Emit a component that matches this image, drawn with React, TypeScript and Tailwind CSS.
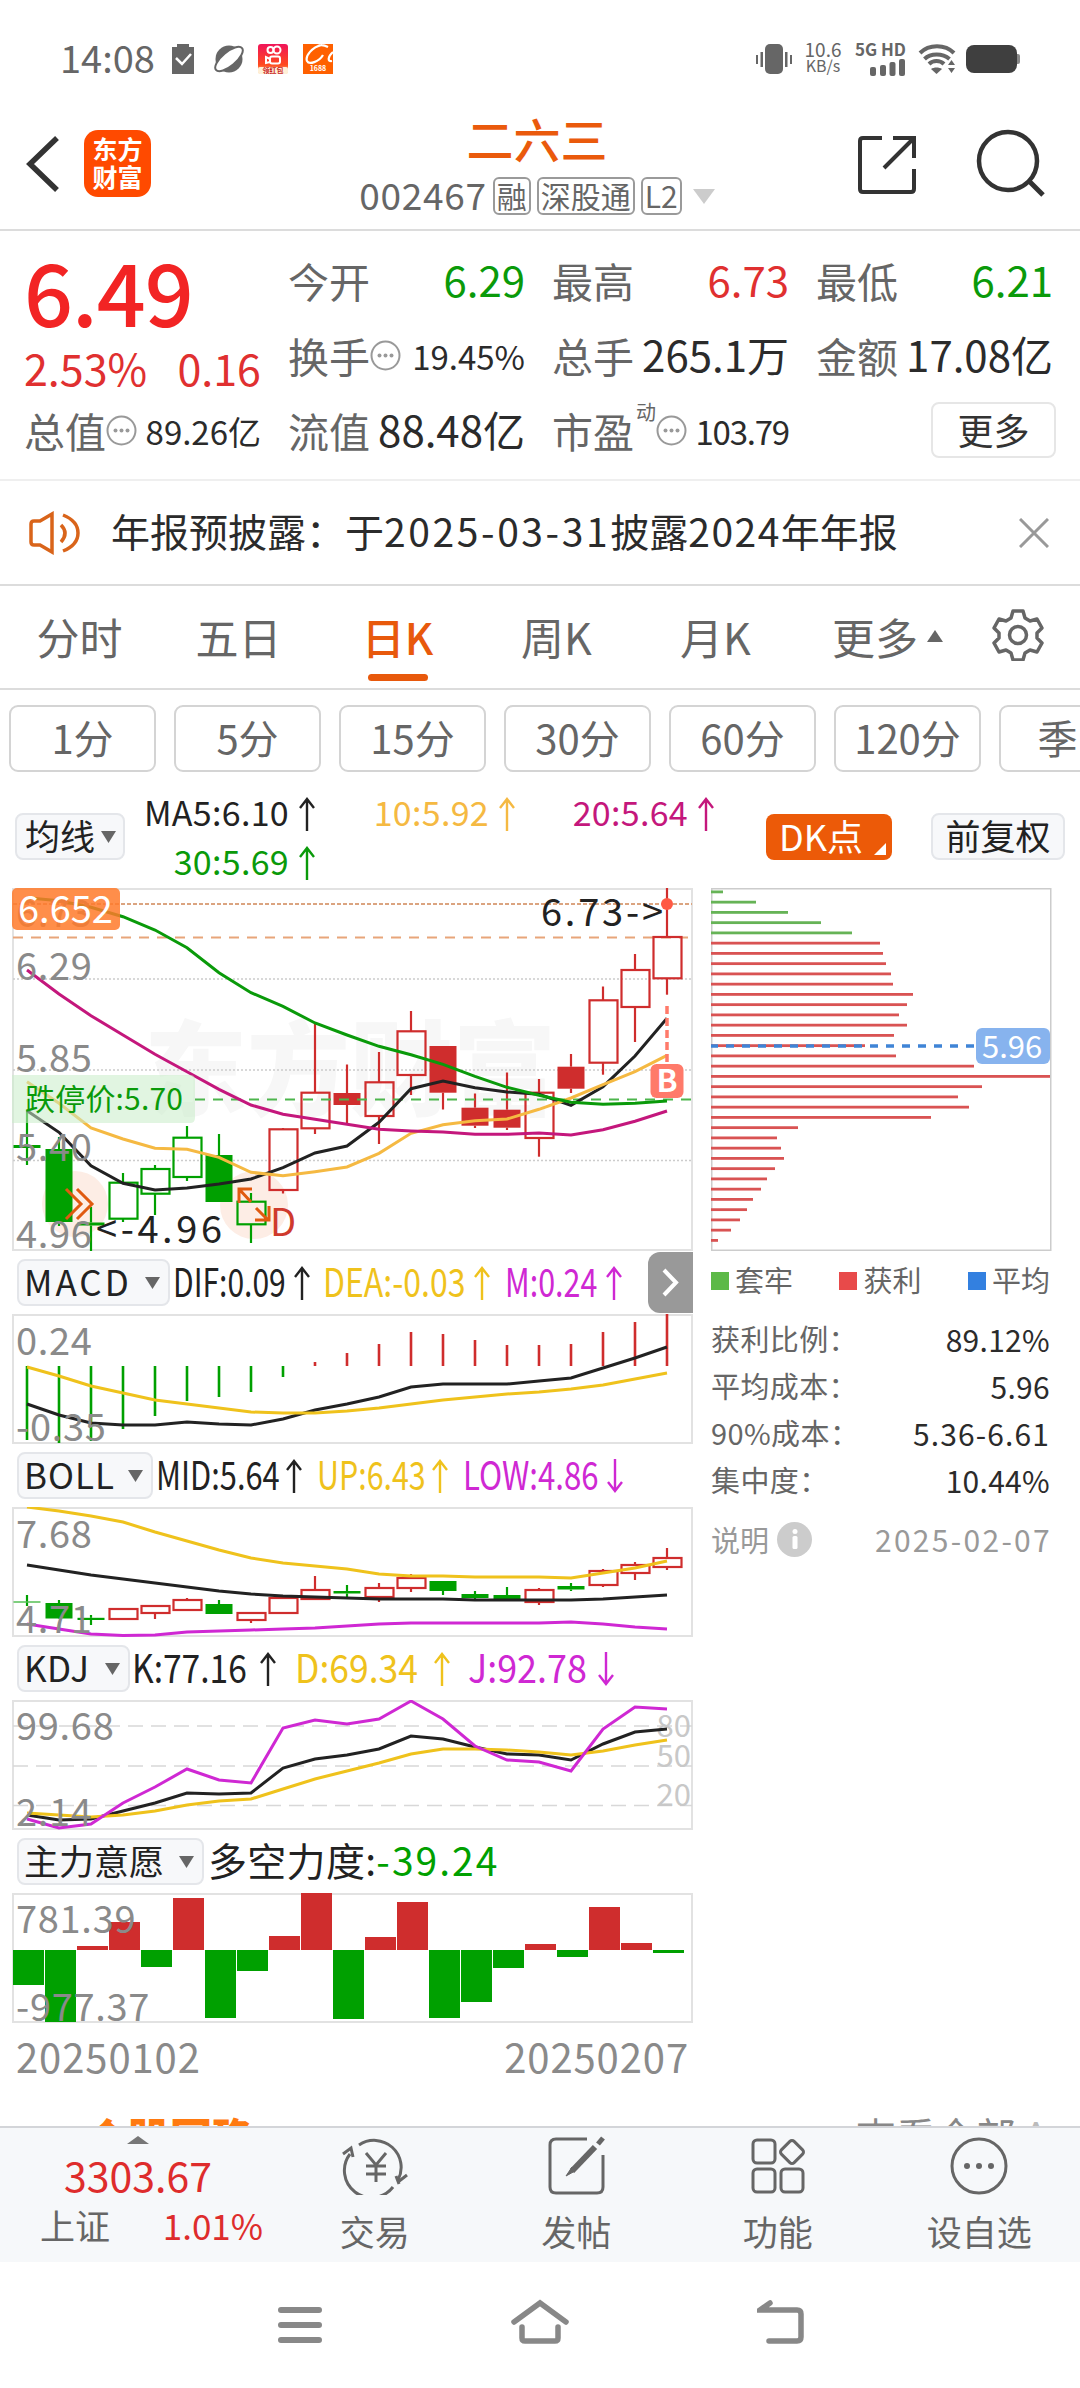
import type { ReactNode } from 'react';

const STEP = 32;
const FIRST = 15;
const px = (i: number) => FIRST + i * STEP;

const RED = '#cf2d2d';
const GREEN = '#00a000';

// [high, top, bottom, low, kind] - kind: g/G = green hollow/solid, r/R = red hollow/solid
type Candle = [number, number, number, number, 'g' | 'G' | 'r' | 'R'];

const kline: Candle[] = [
  [222, 257, 260, 277, 'G'],
  [249, 261, 334, 338, 'G'],
  [319, 334.5, 337.5, 363, 'G'],
  [285, 294.7, 330.7, 334, 'g'],
  [277, 281, 305.7, 327, 'g'],
  [238, 249.7, 289, 293, 'g'],
  [246, 267, 314, 314, 'G'],
  [305, 313.7, 336.3, 355, 'g'],
  [240, 241.3, 302, 305.5, 'r'],
  [135.5, 204.7, 240.3, 246, 'r'],
  [176.5, 205, 217, 237, 'R'],
  [164, 194.3, 228, 256, 'r'],
  [123, 143.3, 187, 207, 'r'],
  [158, 158, 204.7, 221.5, 'R'],
  [205.5, 219.7, 237.7, 240, 'R'],
  [184.5, 221.7, 239.7, 242, 'R'],
  [191, 204.7, 250, 268.7, 'r'],
  [166, 178.7, 200.7, 205, 'R'],
  [98.5, 112.3, 174.7, 186.7, 'r'],
  [66, 82, 119, 154, 'r'],
  [0, 49, 90.3, 106.7, 'r'],
];

const ma5 = [222.7, 244.3, 277.7, 295.3, 302, 300, 296, 291, 279.7, 265, 258, 234.3, 200.7, 193, 199.7, 204, 206.3, 217.3, 198.7, 168, 130.3];
const ma10 = [193.7, 215.3, 240, 251, 260.3, 261.3, 269.3, 284.3, 287.7, 283.7, 279, 265.3, 245.3, 236.7, 232.7, 231, 221.3, 210, 196.7, 183.7, 167.3];
const ma20 = [82, 106, 127.7, 147, 166.3, 183.7, 201.3, 217, 226.3, 231.3, 236.3, 241.3, 243, 244, 246.3, 246.3, 245, 247, 241.7, 233.3, 223];
const ma30 = [9.7, 12.7, 19.3, 28.7, 42, 59.7, 84.7, 104.7, 118.3, 135, 147, 158.3, 166.7, 176.3, 188.3, 199.3, 207.3, 214.3, 216.3, 215.3, 213];

const macdBars = [126, 129, 127, 115, 102, 87, 83, 78, 63, 48, 39, 30, 18, 20, 26, 31, 31, 30, 18, 8, 0];
const dif = [90, 101, 109, 111, 111, 108, 110, 111, 105, 96, 90, 83, 73, 70, 70, 70, 67, 64, 54, 44, 33];
const dea = [53, 62, 72, 79, 86, 90, 94, 98, 99, 99, 97, 94, 90, 86, 83, 80, 78, 75, 71, 65, 59];

const bollUp = [0, 4, 9, 15, 25, 34, 43, 51, 56, 59, 62, 67, 69, 69, 70, 70, 70, 71, 66, 61, 54];
const bollMid = [58, 63, 68, 72, 76, 80, 84, 87, 89, 90, 91, 92, 92, 92, 93, 93, 93, 93, 92, 90, 88];
const bollLow = [117, 122, 127, 128.5, 128, 125, 124, 123, 122, 121, 119, 117, 116, 116, 116, 116, 116, 115, 117, 120, 122];
const bollCandles: Candle[] = [
  [88, 94.5, 95.5, 99, 'G'],
  [93, 96, 111.5, 112, 'G'],
  [108, 110.8, 113, 118, 'G'],
  [101, 102, 112, 112, 'r'],
  [99, 99, 106, 112, 'r'],
  [91, 93, 103, 103, 'r'],
  [93, 97, 107, 107, 'G'],
  [105, 106, 113, 116, 'r'],
  [91, 91, 106, 106, 'r'],
  [69, 83, 92, 92, 'r'],
  [78, 84, 86.5, 91, 'G'],
  [76, 81, 90, 95, 'r'],
  [67, 71, 81, 85, 'r'],
  [74, 74, 84, 88, 'G'],
  [84, 87, 91, 92, 'G'],
  [80, 88, 92, 92, 'G'],
  [81, 83, 95, 98, 'r'],
  [76, 79, 82.5, 84, 'G'],
  [62, 64, 78, 80, 'r'],
  [55, 58, 66, 73, 'r'],
  [41, 51, 60, 63, 'r'],
];

const kdjK = [115, 120, 119, 111, 103, 93, 94, 93, 68, 59, 55, 49, 36, 39, 47, 54, 55, 60, 44, 32, 29];
const kdjD = [113, 115, 117, 115, 111, 105, 101, 99, 89, 79, 71, 63, 54, 49, 49, 50, 52, 55, 51, 45, 40];
const kdjJ = [119, 128, 124, 103, 87, 69, 80, 83, 28, 20, 24, 19, 1, 19, 46, 60, 62, 71, 29, 7, 9];

const force = [92, 129, 53, 29, 74, 5, 125, 78, 43, 0, 126, 44, 9, 125, 109, 75, 51, 64, 14, 50, 60];

const chips = [
  12, 45, 77, 110, 141, 169, 172, 175, 180, 182, 202, 196, 188, 196, 183, 154, 185, 263, 339, 271, 247, 258, 220, 87, 66, 70, 73,
  64, 56, 50, 42, 36, 29, 20, 7,
];

function Line({ data, color }: { data: number[]; color: string }) {
  return <polyline points={data.map((y, i) => `${px(i)},${y}`).join(' ')} fill="none" stroke={color} strokeWidth={3} />;
}

function Candles({ data }: { data: Candle[] }) {
  return (
    <>
      {data.map(([hi, top, bot, lo, kind], i) => {
        const color = kind === 'g' || kind === 'G' ? GREEN : RED;
        const solid = kind === 'G' || kind === 'R';
        const x = px(i);
        return (
          <g key={i} stroke={color} strokeWidth={2.2}>
            <line x1={x} x2={x} y1={hi} y2={top} />
            <line x1={x} x2={x} y1={bot} y2={lo} />
            {solid ? (
              <rect x={x - 13.5} y={top} width={27} height={bot - top} fill={color} stroke="none" />
            ) : (
              <rect x={x - 13.5} y={top} width={28} height={bot - top} fill="none" />
            )}
          </g>
        );
      })}
    </>
  );
}

function AxisText({ x = 4, y, children }: { x?: number; y: number; children: ReactNode }) {
  return (
    <text x={x} y={y} fontSize={38} letterSpacing={0.7} fill="#8a8a8a">
      {children}
    </text>
  );
}

function Arrow({ down = false }: { down?: boolean }) {
  return (
    <svg width="16" height="34" viewBox="0 0 16 34" fill="none" stroke="currentColor" strokeWidth="2.4" className="shrink-0">
      {down ? <path d="M8 0v32M1 23l7 9 7-9" /> : <path d="M8 34V2M1 11l7-9 7 9" />}
    </svg>
  );
}

function Caret({ className = '' }: { className?: string }) {
  return (
    <svg width="15" height="12" viewBox="0 0 15 12" fill="#666" className={`shrink-0 ${className}`}>
      <path d="M0 0h15L7.5 12z" />
    </svg>
  );
}

function Dots() {
  return (
    <svg width="31" height="31" viewBox="0 0 31 31" className="shrink-0">
      <circle cx="15.5" cy="15.5" r="14" fill="none" stroke="#999" strokeWidth="2" />
      <circle cx="9.5" cy="15.5" r="2" fill="#999" />
      <circle cx="15.5" cy="15.5" r="2" fill="#999" />
      <circle cx="21.5" cy="15.5" r="2" fill="#999" />
    </svg>
  );
}

// Indicator readout drawn in condensed type
function Readout({ text, box, scale, color, down }: { text: string; box: string; scale: string; color: string; down?: boolean }) {
  return (
    <div className={`flex items-center justify-between shrink-0 ${box} ${color}`}>
      <div className="w-0">
        <span className={`inline-block whitespace-nowrap text-[39px] leading-[40px] origin-left relative -top-[2px] ${scale}`}>{text}</span>
      </div>
      <Arrow down={down} />
    </div>
  );
}

function Picker({ children, box }: { children: ReactNode; box: string }) {
  return (
    <div className={`flex items-center justify-between h-[47px] pl-[5px] pr-[8px] border-2 border-[#e4e6ea] rounded-lg bg-[#f7f8fa] text-[#222] text-[35px] leading-none shrink-0 ${box}`}>
      <span className="whitespace-nowrap relative -top-[2px]">{children}</span>
      <Caret />
    </div>
  );
}

function StatusBar() {
  return (
    <div className="flex items-center h-[118px] pl-[60px] pr-[60px] text-[#666]">
      <div className="text-[38px] leading-none relative -top-[2px]">14:08</div>
      <svg width="22" height="30" viewBox="0 0 22 30" className="ml-[17px]">
        <path d="M0 3h5V0h12v3h5v27H0z" fill="#666" />
        <path d="M4 14l6 6 9-10" stroke="#fff" strokeWidth="2.5" fill="none" />
      </svg>
      <svg width="32" height="30" viewBox="0 0 32 30" className="ml-[19px]">
        <circle cx="16" cy="15" r="13.5" fill="#666" />
        <ellipse cx="16" cy="15" rx="17" ry="7" transform="rotate(-40 16 15)" fill="#fff" stroke="#666" strokeWidth="2" />
      </svg>
      <svg width="30" height="30" viewBox="0 0 30 30" className="ml-[13px]">
        <defs>
          <linearGradient id="ks" x1="0" y1="0" x2="0" y2="1">
            <stop offset="0" stopColor="#f0145a" />
            <stop offset="0.7" stopColor="#ff4a1c" />
            <stop offset="1" stopColor="#ffd9a0" />
          </linearGradient>
        </defs>
        <rect width="30" height="30" rx="3" fill="url(#ks)" />
        <rect y="23" width="30" height="7" rx="2" fill="#fff0d8" />
        <g fill="none" stroke="#fff" strokeWidth="2">
          <circle cx="12.5" cy="6" r="3" />
          <circle cx="19" cy="6" r="3.5" />
          <rect x="12" y="12.500" width="10" height="7" rx="2" />
          <path d="M12 15l-4-2v6l4-1" />
        </g>
        <text x="15" y="29" fontSize="7" fontWeight="700" fill="#c81e1e" textAnchor="middle">领红包</text>
      </svg>
      <svg width="30" height="30" viewBox="0 0 30 30" className="ml-[15px]">
        <rect width="30" height="30" fill="#ff6000" />
        <path d="M19 1C9 3 2 12 4 17c2 4 12 1 16-6M15 2c4-2 8 0 10 1M30 8c-5 4-6 10-1 9" fill="none" stroke="#fff" strokeWidth="2.2" />
        <text x="15" y="27" fontSize="7" fontWeight="700" fill="#fff" textAnchor="middle">1688</text>
      </svg>
      <div className="flex-1" />
      <svg width="36" height="30" viewBox="0 0 36 30" fill="#666">
        <rect x="9" width="18" height="30" rx="5" />
        <rect x="0" y="11" width="2" height="9" />
        <rect x="4.5" y="8" width="2.5" height="15" />
        <rect x="29" y="8" width="2.5" height="15" />
        <rect x="34" y="11" width="2" height="9" />
      </svg>
      <div className="ml-[13px] w-[36px] flex flex-col items-center text-[19px] leading-[17px]">
        <div className="-mt-[4px]">10.6</div>
        <div className="text-[16px]">KB/s</div>
      </div>
      <div className="ml-[16px] w-[49px] flex flex-col items-end">
        <div className="text-[17px] leading-[15px] font-bold whitespace-nowrap -mt-[2px]">5G HD</div>
        <svg width="36" height="17" viewBox="0 0 36 17" fill="#666" className="mt-[3px]">
          <rect x="0" y="8" width="6" height="9" rx="2" />
          <rect x="10" y="6" width="6" height="11" rx="2" />
          <rect x="19.5" y="3" width="6" height="14" rx="2" />
          <rect x="29" y="0" width="6" height="17" rx="2" />
        </svg>
      </div>
      <svg width="38" height="30" viewBox="0 0 38 30" className="ml-[12px]" fill="none" stroke="#666" strokeWidth="4">
        <path d="M2 9c9-9 25-9 34 0M6.500 15c6-6 18-6 25 0M11 20c4-4 11-4 15 0" />
        <path d="M13 25c3-2 8-2 11 0l-5.500 5z" fill="#666" stroke="none" />
        <path d="M30 21l3.500-5 3.500 5zM30 24h7l-3.500 5z" fill="#666" stroke="none" />
      </svg>
      <svg width="54" height="28" viewBox="0 0 54 28" className="ml-[10px]" fill="#3f3f3f">
        <rect width="51" height="28" rx="8" />
        <path d="M51 9h1q2 0 2 2v6q0 2-2 2h-1z" fill="#888" />
      </svg>
    </div>
  );
}

function Tag({ children }: { children: ReactNode }) {
  return (
    <span className="flex items-center h-[38px] px-[2px] border-2 border-[#9a9a9a] rounded-md text-[30px] leading-none">
      <span className="relative -top-[1px]">{children}</span>
    </span>
  );
}

function Header() {
  return (
    <div className="flex items-center h-[113px] border-b-2 border-[#dcdcdc] pl-[26px] pr-[34px]">
      <svg width="34" height="56" viewBox="0 0 34 56" fill="none" stroke="#333" strokeWidth="5.500" className="-mt-[20px]">
        <path d="M31 2L4 28l27 26" />
      </svg>
      <div className="ml-[24px] -mt-[20px] size-[67px] rounded-[14px] bg-[#ff4a00] text-white font-bold text-[25px] leading-[28px] text-center pt-[4px]">
        东方
        <br />
        财富
      </div>
      <div className="flex-1 flex flex-col items-center pl-[66px]">
        <div className="text-[47px] leading-[48px] font-medium text-[#ea5a0c] -mt-[6px]">二六三</div>
        <div className="flex items-center gap-[6px] mt-[15px] pb-[12px] text-[#666]">
          <span className="text-[37px] leading-[38px] tracking-[0.7px] relative -top-[2px]">002467</span>
          <Tag>融</Tag>
          <Tag>深股通</Tag>
          <Tag>L2</Tag>
          <svg width="22" height="15" viewBox="0 0 22 15" fill="#ccc" className="ml-[5px]">
            <path d="M0 0h22L11 15z" />
          </svg>
        </div>
      </div>
      <svg width="60" height="60" viewBox="0 0 60 60" fill="none" stroke="#333" strokeWidth="4" className="-mt-[20px]">
        <path d="M25 4H6q-3 0-3 3v48q0 3 3 3h48q3 0 3-3V35" />
        <path d="M36 4h21v20M57 4L27 34" />
      </svg>
      <svg width="70" height="70" viewBox="0 0 70 70" fill="none" stroke="#333" strokeWidth="4.5" className="ml-[59px] -mt-[20px]">
        <circle cx="32" cy="32" r="29" />
        <path d="M53 52l14 14" strokeWidth="5" />
      </svg>
    </div>
  );
}

function Cell({ label, value, tone = 'text-[#2b2b2b]', info, sup }: { label: string; value: string; tone?: string; info?: boolean; sup?: string }) {
  return (
    <div className="flex items-center justify-between h-[44px]">
      <div className="flex items-center text-[41px] leading-none text-[#666] whitespace-nowrap">
        <span>{label}</span>
        {sup && <span className="text-[20px] self-start -mt-[8px] ml-[2px]">{sup}</span>}
        {info && <Dots />}
      </div>
      <span className={`leading-none whitespace-nowrap relative ${info ? 'text-[33px] top-[1px]' : 'text-[42px] -top-[1px]'} ${sup ? 'tracking-[-1.2px]' : ''} ${tone}`}>
        {value}
      </span>
    </div>
  );
}

function Quote() {
  const red = 'text-[#e03030]';
  const green = 'text-[#0a9a0a]';
  return (
    <div className="grid grid-cols-4 gap-x-[27px] h-[250px] pl-[24px] pr-[27px] border-b-2 border-[#efefef]">
      <div className="pt-[14px]">
        <div className="text-[86px] leading-[90px] font-medium text-[#f22424] tracking-[-1px]">6.49</div>
        <div className={`flex justify-between mt-[10px] mb-[19px] text-[43px] leading-[44px] ${red}`}>
          <span>2.53%</span>
          <span>0.16</span>
        </div>
        <Cell label="总值" value="89.26亿" info />
      </div>
      <div className="flex flex-col gap-[31px] pt-[27px]">
        <Cell label="今开" value="6.29" tone={green} />
        <Cell label="换手" value="19.45%" info />
        <Cell label="流值" value="88.48亿" />
      </div>
      <div className="flex flex-col gap-[31px] pt-[27px]">
        <Cell label="最高" value="6.73" tone={red} />
        <Cell label="总手" value="265.1万" />
        <Cell label="市盈" value="103.79" info sup="动" />
      </div>
      <div className="flex flex-col gap-[31px] pt-[27px]">
        <Cell label="最低" value="6.21" tone={green} />
        <Cell label="金额" value="17.08亿" />
        <div className="-my-[6px] -mr-[3px] self-end flex items-center justify-center w-[125px] h-[56px] pb-[3px] border-2 border-[#e6e6e6] rounded-lg text-[36px] leading-none text-[#333]">
          更多
        </div>
      </div>
    </div>
  );
}

function Notice() {
  return (
    <div className="flex items-center h-[105px] border-b-2 border-[#dcdcdc] pl-[29px] pr-[31px]">
      <svg width="52" height="44" viewBox="0 0 52 44" fill="none" stroke="#d9641a" strokeWidth="3.5">
        <path d="M23 3v38L11 34H5q-3 0-3-3V13q0-3 3-3h6z" />
        <path d="M32 14q8 8 0 17M34 4q15 6 15 18T34 40" />
      </svg>
      <div className="ml-[30px] flex-1 text-[39px] leading-none text-[#2b2b2b] whitespace-nowrap relative -top-[2px]">
        年报预披露：于<span className="tracking-[2.6px]">2025-03-31</span>披露<span className="tracking-[1.5px]">2024</span>年年报
      </div>
      <svg width="30" height="30" viewBox="0 0 30 30" stroke="#999" strokeWidth="3">
        <path d="M1 1l28 28M29 1L1 29" />
      </svg>
    </div>
  );
}

function Tabs() {
  return (
    <div className="flex items-center h-[104px] border-b-2 border-[#dcdcdc] text-[43px] text-[#666]">
      {['分时', '五日', '日K', '周K', '月K'].map((t) => (
        <div key={t} className={`relative flex items-center justify-center w-[159px] h-full pb-[2px] leading-none ${t === '日K' ? 'text-[#e8590c] font-medium' : ''}`}>
          {t}
          {t === '日K' && <span className="absolute bottom-[7px] w-[60px] h-[7px] rounded-full bg-[#e8590c]" />}
        </div>
      ))}
      <div className="flex items-center ml-[37px] pb-[2px] leading-none">
        更多
        <svg width="16" height="12" viewBox="0 0 16 12" fill="#666" className="ml-[9px]">
          <path d="M0 12h16L8 0z" />
        </svg>
      </div>
      <svg width="52" height="52" viewBox="0 0 52 52" fill="none" stroke="#666" strokeWidth="3.5" strokeLinejoin="round" className="ml-auto mr-[36px] -mt-[4px]">
        <path d="M21 2h10l2 7 5 3 7-2 5 9-5 5v5l5 5-5 9-7-2-5 3-2 7H21l-2-7-5-3-7 2-5-9 5-5v-5l-5-5 5-9 7 2 5-3z" />
        <circle cx="26" cy="26" r="8.5" />
      </svg>
    </div>
  );
}

function Minutes() {
  return (
    <div className="flex gap-[18px] pl-[9px] pt-[15px] overflow-hidden">
      {['1分', '5分', '15分', '30分', '60分', '120分', '季'].map((t) => (
        <div key={t} className="shrink-0 flex items-center justify-center w-[147px] h-[67px] pb-[3px] border-2 border-[#d4d4d4] rounded-[9px] text-[40px] leading-none text-[#666]">
          {t === '季' ? <span className="ml-[-30px]">{t}</span> : t}
        </div>
      ))}
    </div>
  );
}

function MaItem({ text, color }: { text: string; color: string }) {
  return (
    <div className={`flex items-center justify-end gap-[10px] h-[49px] leading-none whitespace-nowrap ${color}`}>
      <span className="relative -top-[2px] tracking-[0.3px]">{text}</span>
      <Arrow />
    </div>
  );
}

function MaBar() {
  return (
    <div className="flex h-[116px] text-[34px]">
      <div className="ml-[15px] mt-[41px] flex items-center justify-between w-[110px] h-[47px] pl-[8px] pr-[7px] border-2 border-[#e4e6ea] rounded-lg bg-[#f7f8fa] text-[35px] leading-none text-[#222]">
        <span className="whitespace-nowrap relative -top-[2px]">均线</span>
        <Caret />
      </div>
      <div className="ml-[12px] mt-[17px] grid grid-cols-[178px_200px_199px] content-start">
        <MaItem text="MA5:6.10" color="text-[#222]" />
        <MaItem text="10:5.92" color="text-[#f5b942]" />
        <MaItem text="20:5.64" color="text-[#c4177c]" />
        <MaItem text="30:5.69" color="text-[#0a9a0a]" />
      </div>
      <div className="ml-auto mt-[42px] relative w-[126px] h-[46px] rounded-lg bg-[#ec5a08] text-white text-[36px] leading-[42px] pl-[13px] whitespace-nowrap">
        DK点
        <svg width="12" height="12" viewBox="0 0 12 12" fill="#fff" className="absolute right-[6px] bottom-[5px]">
          <path d="M12 0v12H0z" />
        </svg>
      </div>
      <div className="ml-[39px] mr-[15px] mt-[41px] flex items-center justify-center w-[134px] h-[47px] pb-[4px] border-2 border-[#e4e6ea] rounded-lg bg-[#f7f8fa] text-[35px] leading-none text-[#222]">
        前复权
      </div>
    </div>
  );
}

function KlineChart() {
  return (
    <svg width="681" height="363" viewBox="0 0 681 363" className="block overflow-visible">
      <rect x="1" y="1" width="679" height="361" fill="none" stroke="#e2e2e2" strokeWidth="2" />
      <text x="132" y="220" fontSize="103" fontWeight="900" fill="#f7f7f7">
        东方财富
      </text>
      <g stroke="#ccc" strokeWidth="1.5" strokeDasharray="2 2">
        <path d="M1 91h679M1 182h679M1 272.500h679" />
      </g>
      <circle cx="63" cy="316" r="33" fill="#fdede5" />
      <circle cx="242" cy="317" r="34" fill="#fdede5" />
      <path d="M1 16h679" stroke="#dba480" strokeWidth="2" strokeDasharray="4 2" />
      <path d="M1 49.500h675" stroke="#e8a57a" strokeWidth="2" strokeDasharray="10 8" />
      <Candles data={kline} />
      <path d="M183 211.500h497" stroke="#4db54d" strokeWidth="1.8" strokeDasharray="10 8" />
      <Line data={ma5} color="#222" />
      <Line data={ma10} color="#f5b942" />
      <Line data={ma20} color="#c4177c" />
      <Line data={ma30} color="#0a9a0a" />

      <g fill="none" stroke="#e05a10" strokeWidth="3">
        <path d="M54 301l15 15-15 15M65 301l15 15-15 15" />
        <path d="M239 314l-12-13M240 301h-13v14M244 320l12 12M243 332h14v-14" />
      </g>

      <AxisText y={39}>6.73</AxisText>
      <AxisText y={92}>6.29</AxisText>
      <AxisText y={184}>5.85</AxisText>
      <AxisText y={273}>5.40</AxisText>
      <AxisText y={360}>4.96</AxisText>

      <rect x="0" y="0" width="108" height="42" rx="5" fill="#ff7a2a" fillOpacity="0.85" />
      <text x="6" y="34.5" fontSize="38" fill="#fff">
        6.652
      </text>
      <path d="M0 187h178q5 0 5 5v38q0 5-5 5H0z" fill="#c9ecc9" fillOpacity="0.55" />
      <text x="13" y="222" fontSize="30" fill="#0a9a0a" textLength="158">
        跌停价:5.70
      </text>
      <text x="84" y="355" fontSize="38" fill="#222" textLength="126">
        {'<-4.96'}
      </text>
      <text x="529" y="37.5" fontSize="38" fill="#222" textLength="122">
        {'6.73->'}
      </text>
      <text x="258" y="348" fontSize="38" fill="#cf3a2d">
        D
      </text>
      <path d="M655 118v58" stroke="#ff7a6a" strokeWidth="3.5" strokeDasharray="8 4" />
      <circle cx="655" cy="16" r="6" fill="#ff5a45" />
      <rect x="638.5" y="176" width="33" height="34" rx="6" fill="#ff7a6a" />
      <text x="655" y="204" fontSize="31" fontWeight="700" fill="#fff" textAnchor="middle">
        B
      </text>
    </svg>
  );
}

function Panel({ children }: { children: ReactNode }) {
  return (
    <svg width="681" height="130" viewBox="0 0 681 130" className="block">
      <rect x="1" y="1" width="679" height="128" fill="none" stroke="#e2e2e2" strokeWidth="2" />
      {children}
    </svg>
  );
}

function Indicators() {
  const yellow = 'text-[#efc21c]';
  const purple = 'text-[#cf28d3]';
  return (
    <div className="w-[681px]">
      <KlineChart />
      <div className="relative flex items-center h-[63px] pl-[5px]">
        <Picker box="w-[153px]"><span className="tracking-[3px]">MACD</span></Picker>
        <Readout text="DIF:0.09" box="ml-[3px] w-[137px]" scale="scale-x-[0.77]" color="text-[#222]" />
        <Readout text="DEA:-0.03" box="ml-[13px] w-[167px]" scale="scale-x-[0.82]" color={yellow} />
        <Readout text="M:0.24" box="ml-[15px] w-[117px]" scale="scale-x-[0.78]" color={purple} />
        <div className="absolute right-0 top-[1px] w-[45px] h-[61px] rounded-l-[12px] bg-[#999] flex items-center justify-center">
          <svg width="17" height="29" viewBox="0 0 17 29" fill="none" stroke="#fff" strokeWidth="4">
            <path d="M2 2l12 12.500L2 27" />
          </svg>
        </div>
      </div>
      <Panel>
        {macdBars.map((y, i) => (
          <line key={i} x1={px(i)} x2={px(i)} y1={52} y2={y} stroke={y > 52 ? GREEN : RED} strokeWidth={2.6} />
        ))}
        <Line data={dif} color="#222" />
        <Line data={dea} color="#efc21c" />
        <AxisText y={41}>0.24</AxisText>
        <AxisText y={127}>-0.35</AxisText>
      </Panel>

      <div className="flex items-center h-[63px] pl-[5px]">
        <Picker box="w-[136px]"><span className="tracking-[1px]">BOLL</span></Picker>
        <Readout text="MID:5.64" box="ml-[3px] w-[146px]" scale="scale-x-[0.79]" color="text-[#222]" />
        <Readout text="UP:6.43" box="ml-[15px] w-[131px]" scale="scale-x-[0.78]" color={yellow} />
        <Readout text="LOW:4.86" box="ml-[15px] w-[160px]" scale="scale-x-[0.8]" color={purple} down />
      </div>
      <Panel>
        <Candles data={bollCandles} />
        <Line data={bollMid} color="#222" />
        <Line data={bollUp} color="#efc21c" />
        <Line data={bollLow} color="#cf28d3" />
        <AxisText y={41}>7.68</AxisText>
        <AxisText y={126}>4.71</AxisText>
      </Panel>

      <div className="flex items-center h-[63px] pl-[5px]">
        <Picker box="w-[113px]"><span className="tracking-[0.5px]">KDJ</span></Picker>
        <Readout text="K:77.16" box="ml-[2px] w-[144px]" scale="scale-x-[0.86]" color="text-[#222]" />
        <Readout text="D:69.34" box="ml-[19px] w-[155px]" scale="scale-x-[0.91]" color={yellow} />
        <Readout text="J:92.78" box="ml-[18px] w-[146px]" scale="scale-x-[0.92]" color={purple} down />
      </div>
      <Panel>
        <path d="M1 26h679M1 66h679M1 105.500h679" stroke="#d8d8d8" strokeWidth="1.5" strokeDasharray="15 8" />
        <g fontSize="31" fill="#c8c8c8" textAnchor="end">
          <text x="679" y="37">80</text>
          <text x="679" y="67">50</text>
          <text x="679" y="106">20</text>
        </g>
        <Line data={kdjK} color="#222" />
        <Line data={kdjD} color="#efc21c" />
        <Line data={kdjJ} color="#cf28d3" />
        <AxisText y={40}>99.68</AxisText>
        <AxisText y={126}>2.14</AxisText>
      </Panel>

      <div className="flex items-center h-[63px] pl-[5px]">
        <Picker box="w-[187px]">主力意愿</Picker>
        <div className="ml-[4px] text-[39px] leading-none tracking-[0.3px] whitespace-nowrap text-[#222] relative -top-[2px]">
          多空力度:<span className="tracking-[2px] text-[#00a000]">-39.24</span>
        </div>
      </div>
      <Panel>
        {force.map((y, i) => (
          <rect key={i} x={1 + i * STEP} y={Math.min(y, 57)} width={31} height={Math.abs(y - 57)} fill={y > 57 ? GREEN : RED} />
        ))}
        <AxisText y={40}>781.39</AxisText>
        <AxisText y={128}>-977.37</AxisText>
      </Panel>
      <div className="flex justify-between pl-[4px] pr-[4px] pt-[11px] text-[40px] leading-[44px] tracking-[0.9px] text-[#8a8a8a]">
        <span>20250102</span>
        <span>20250207</span>
      </div>
    </div>
  );
}

function Stat({ label, value, spaced }: { label: string; value: string; spaced?: boolean }) {
  return (
    <div className="flex justify-between h-[47px] items-center leading-none whitespace-nowrap">
      <span className="text-[29px] tracking-[0.4px] text-[#666]">{label}</span>
      <span className={`text-[30px] text-[#2b2b2b] ${spaced ? 'tracking-[1.1px]' : 'tracking-[0.3px]'}`}>{value}</span>
    </div>
  );
}

function ChipDistribution() {
  const legend = [
    ['套牢', 'bg-[#5cb947]'],
    ['获利', 'bg-[#e84a4a]'],
    ['平均', 'bg-[#3380e0]'],
  ];
  return (
    <div className="w-[341px]">
      <svg width="341" height="363" viewBox="0 0 341 363" className="block">
        <rect x="0.75" y="0.75" width="339" height="361.5" fill="none" stroke="#ccc" strokeWidth="1.5" />
        {chips.map((w, i) => (
          <rect key={i} x={0} y={2.5 + i * 10.25} width={w} height={2.8} fill={i < 5 ? '#66b356' : '#d95353'} />
        ))}
        <path d="M-1 158h264" stroke="#3f84d6" strokeWidth="3.5" strokeDasharray="8 8" />
        <rect x="265" y="140" width="74" height="36" rx="6" fill="#87b3ee" />
        <text x="271" y="169.5" fontSize="31" fill="#fff">
          5.96
        </text>
      </svg>
      <div className="flex justify-between h-[60px] items-center pr-[2px]">
        {legend.map(([name, color]) => (
          <div key={name} className="flex items-center gap-[6px] text-[29px] leading-none text-[#666]">
            <span className={`size-[18px] ${color}`} />
            <span className="relative -top-[2px]">{name}</span>
          </div>
        ))}
      </div>
      <div className="pt-[4px] pr-[2px]">
        <Stat label="获利比例：" value="89.12%" />
        <Stat label="平均成本：" value="5.96" />
        <Stat label="90%成本：" value="5.36-6.61" spaced />
        <Stat label="集中度：" value="10.44%" />
      </div>
      <div className="flex items-center mt-[17px] pr-[2px] h-[38px] leading-none text-[#999]">
        <span className="text-[29px]">说明</span>
        <span className="ml-[8px] size-[35px] rounded-full bg-[#ccc] flex items-center justify-center">
          <svg width="6" height="20" viewBox="0 0 6 20" fill="#fff">
            <circle cx="3" cy="2.5" r="2.5" />
            <rect x="0.5" y="7" width="5" height="13" rx="1.5" />
          </svg>
        </span>
        <span className="ml-auto text-[30px] tracking-[2.3px] -mr-[2px]">2025-02-07</span>
      </div>
    </div>
  );
}

function NavItem({ label, children }: { label: string; children: ReactNode }) {
  return (
    <div className="flex-1 flex flex-col items-center pt-[7px] text-[35px] leading-none text-[#666]">
      <svg width="66" height="60" viewBox="0 0 66 60" fill="none" stroke="#666" strokeWidth="3">
        {children}
      </svg>
      <span className="mt-[18px]">{label}</span>
    </div>
  );
}

function BottomBar() {
  return (
    <div className="flex h-[136px] border-t-2 border-[#d3d5d9] bg-[#f6f8fa]">
      <div className="w-[274px] pt-[8px]">
        <svg width="22" height="8" viewBox="0 0 22 8" fill="#777" className="ml-[127px] block">
          <path d="M0 8h22L11 0z" />
        </svg>
        <div className="ml-[64px] mt-[6px] text-[41px] leading-[48px] text-[#de2c2c]">3303.67</div>
        <div className="flex justify-between pl-[40px] pr-[11px] leading-[48px] text-[#666] text-[35px] mt-[3px]">
          <span>上证</span>
          <span className="text-[#de2c2c]">1.01%</span>
        </div>
      </div>
      <NavItem label="交易">
        <path d="M17 10a27 27 0 0 1 39 35M51 52A27 27 0 0 1 8 19" />
        <path d="M1 19l8-6 2 9M57 49l-3-8M56 47l9-7" />
        <path d="M24 18l10 12 10-12M34 30v17M24 31h20M24 39h20" />
      </NavItem>
      <NavItem label="发帖">
        <path d="M44 4H13q-6 0-6 6v42q0 6 6 6h41q6 0 6-6V20" />
        <path d="M52 12L29 36" strokeWidth="6" />
        <path d="M29 32l-6 9 9-5z" fill="#666" strokeWidth="1" />
        <path d="M55 9l5-6" strokeWidth="5" />
      </NavItem>
      <NavItem label="功能">
        <rect x="8" y="5" width="22" height="23" rx="4" />
        <rect x="8" y="34" width="22" height="23" rx="4" />
        <rect x="36" y="34" width="22" height="23" rx="4" />
        <rect x="38" y="8" width="18" height="18" rx="3" transform="rotate(45 47 17)" />
      </NavItem>
      <NavItem label="设自选">
        <circle cx="33" cy="31" r="27" />
        <g fill="#666" stroke="none">
          <circle cx="21" cy="31" r="3" />
          <circle cx="33" cy="31" r="3" />
          <circle cx="45" cy="31" r="3" />
        </g>
      </NavItem>
    </div>
  );
}

function SystemNav() {
  return (
    <div className="flex justify-between h-[126px] pt-[37px] pl-[277px] pr-[275px]">
      <svg width="46" height="46" viewBox="0 0 46 46" stroke="#888" strokeWidth="6" strokeLinecap="round">
        <path d="M4 11h38M4 26h38M4 41h38" />
      </svg>
      <svg width="60" height="46" viewBox="0 0 60 46" fill="none" stroke="#888" strokeWidth="5.5" strokeLinecap="round">
        <path d="M4 23L30 4l26 19" />
        <path d="M12 28v11q0 3 3 3h30q3 0 3-3V28" />
      </svg>
      <svg width="48" height="46" viewBox="0 0 48 46" fill="none" stroke="#888" strokeWidth="5.5" strokeLinecap="round">
        <path d="M12 42h28q4 0 4-4V15q0-4-4-4H3l10-7" />
      </svg>
    </div>
  );
}

export default function App() {
  return (
    <div className="w-[1080px] h-[2388px] bg-white overflow-hidden flex flex-col font-['Noto_Sans_CJK_SC',sans-serif]">
      <StatusBar />
      <Header />
      <Quote />
      <Notice />
      <Tabs />
      <Minutes />
      <MaBar />
      <div className="flex gap-[18px] pl-[12px]">
        <Indicators />
        <ChipDistribution />
      </div>
      <div className="flex-1 min-h-0 overflow-hidden flex justify-between items-start pl-[86px] pr-[33px] pt-[37px] leading-none whitespace-nowrap">
        <span className="text-[42px] font-black text-[#ff7a10]">个股回确</span>
        <span className="text-[40px] text-[#888]">查看全部 <span className="text-[#bbb]">^</span></span>
      </div>
      <BottomBar />
      <SystemNav />
    </div>
  );
}
